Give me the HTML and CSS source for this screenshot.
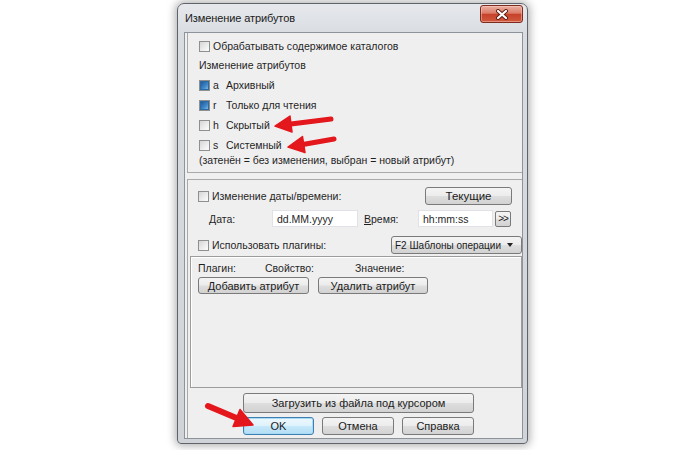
FILE: index.html
```html
<!DOCTYPE html>
<html lang="ru">
<head>
<meta charset="utf-8">
<title>Изменение атрибутов</title>
<link rel="stylesheet" href="styles.css">
</head>
<body>
<div class="window">
  <div class="titlebar">
    <span class="title">Изменение атрибутов</span>
    <span class="close"><svg width="14" height="11" viewBox="0 0 14 11"><path d="M3 2 L11 9 M11 2 L3 9" stroke="#5b1b10" stroke-width="4" stroke-linecap="round"/><path d="M3 2 L11 9 M11 2 L3 9" stroke="#ffffff" stroke-width="2.2" stroke-linecap="round"/></svg></span>
  </div>
  <div class="client">
    <div class="attrs">
      <div class="row first"><span class="cb"></span><span>Обрабатывать содержимое каталогов</span></div>
      <div class="caption">Изменение атрибутов</div>
      <div class="row attr"><span class="cb ind"></span><span class="key">a</span><span>Архивный</span></div>
      <div class="row attr"><span class="cb ind"></span><span class="key">r</span><span>Только для чтения</span></div>
      <div class="row attr"><span class="cb"></span><span class="key">h</span><span>Скрытый</span></div>
      <div class="row attr"><span class="cb"></span><span class="key">s</span><span>Системный</span></div>
      <div class="note">(затенён = без изменения, выбран = новый атрибут)</div>
    </div>
    <div class="dates">
      <div class="row r-date"><span class="cb"></span><span>Изменение даты/времени:</span><span class="btn current">Текущие</span></div>
      <div class="row r-fields"><span class="lbl l-date"><u>Д</u>ата:</span><span class="edit e-date">dd.MM.yyyy</span><span class="lbl l-time"><u>В</u>ремя:</span><span class="edit e-time">hh:mm:ss</span><span class="btn more">&gt;&gt;</span></div>
      <div class="row r-plug"><span class="cb"></span><span>Использовать плагины:</span><span class="btn combo"><span>F2 Шаблоны операции</span><span class="arrow"></span></span></div>
      <div class="plugins">
        <div class="heads"><span class="h-plugin">Плагин:</span><span class="h-prop">Свойство:</span><span>Значение:</span></div>
        <div class="pbtns"><span class="btn add">Добавить атрибут</span><span class="btn del">Удалить атрибут</span></div>
      </div>
      <div class="btn load">Загрузить из файла под курсором</div>
      <div class="actions"><span class="btn ok">OK</span><span class="btn cancel">Отмена</span><span class="btn help">Справка</span></div>
    </div>
  </div>
</div>
<svg class="marks" width="700" height="450" viewBox="0 0 700 450">
  <g fill="#e3171c" stroke="#e3171c" stroke-linecap="round" stroke-linejoin="round">
    <line x1="331" y1="119" x2="287" y2="124.5" stroke-width="5"/>
    <polygon points="275,126 292,132 290,116" stroke-width="1.5"/>
    <line x1="334" y1="139" x2="300" y2="145" stroke-width="5"/>
    <polygon points="288,147 305,152.5 302.5,136.5" stroke-width="1.5"/>
    <line x1="208" y1="406" x2="240" y2="419.5" stroke-width="6"/>
    <polygon points="253,425 233,426.5 240,409.5" stroke-width="1.5"/>
  </g>
</svg>
</body>
</html>
```

FILE: styles.css
```css
html, body {
  margin: 0;
  padding: 0;
}

body {
  width: 700px;
  height: 450px;
  overflow: hidden;
  background: #ffffff;
  font-family: "Liberation Sans", Arial, sans-serif;
  font-size: 10.5px;
  color: #1f1f1f;
  position: relative;
  white-space: nowrap;
}

.window {
  box-sizing: border-box;
  width: 351px;
  height: 441px;
  margin: 3px 0 0 177px;
  border: 1px solid #5f646a;
  border-radius: 7px 7px 4px 4px;
  background: linear-gradient(180deg, #e6e8ec 0, #d9dde2 30px, #d0d4d9 100%);
  padding: 0 4px 4px 6px;
  display: flex;
  flex-direction: column;
  box-shadow: 0 0 8px 2px rgba(0, 0, 0, 0.3);
}

.titlebar {
  height: 28px;
  flex: none;
  display: flex;
  justify-content: space-between;
  align-items: flex-start;
}

.title {
  font-size: 11px;
  letter-spacing: -0.1px;
  line-height: 14px;
  margin: 7px 0 0 1px;
  color: #202020;
}

.close {
  box-sizing: border-box;
  width: 43px;
  height: 18px;
  margin-top: 1px;
  border: 1px solid #7d2b1e;
  border-radius: 3px;
  background: linear-gradient(180deg, #eab0a3 0, #dc7c67 45%, #c6422b 52%, #d15a3f 100%);
  display: flex;
  align-items: center;
  justify-content: center;
  box-shadow: inset 0 0 0 1px rgba(255, 210, 200, 0.45);
}

.close svg {
  display: block;
}

.client {
  flex: 1;
  border: 1px solid #8d939a;
  background: #f0eff0;
  display: flex;
  flex-direction: column;
}

.attrs {
  box-sizing: border-box;
  height: 140px;
  margin-left: 2px;
  border-left: 1px solid #a9a9a9;
  border-bottom: 1px solid #a9a9a9;
  padding-left: 11px;
  flex: none;
}

.row {
  display: flex;
  align-items: center;
}

.first {
  height: 20px;
  margin-top: 3px;
}

.caption {
  height: 18px;
  line-height: 18px;
}

.attr {
  height: 20px;
}

.caption + .attr {
  margin-top: 1px;
}

.note {
  line-height: 14px;
  margin-top: -2px;
}

.cb {
  box-sizing: border-box;
  width: 11px;
  height: 11px;
  flex: none;
  margin-right: 3px;
  border: 1px solid #8e8f8f;
  background: linear-gradient(135deg, #d6d6d6 0, #f2f2f2 70%, #fbfbfb 100%);
  display: flex;
  align-items: center;
  justify-content: center;
}

.cb.ind::before {
  content: "";
  width: 7px;
  height: 7px;
  background: linear-gradient(135deg, #1e5a9a 0, #3f86c8 60%, #7ab8e6 100%);
  box-shadow: 0 0 0 1px #2c6aa6;
}

.key {
  width: 13px;
  flex: none;
}

.dates {
  flex: 1;
  margin: 6px 0 0 2px;
  border-left: 1px solid #a9a9a9;
  border-top: 1px solid #a9a9a9;
  display: flex;
  flex-direction: column;
}

.btn {
  box-sizing: border-box;
  border: 1px solid #7a7a7a;
  border-radius: 3px;
  background: linear-gradient(180deg, #f4f4f4 0, #ececec 48%, #dedede 52%, #d2d2d2 100%);
  display: flex;
  align-items: center;
  justify-content: center;
  color: #1b1b1b;
  flex: none;
}

.r-date {
  height: 18px;
  margin-top: 7px;
  padding-left: 10px;
}

.current {
  width: 87px;
  height: 18px;
  margin: 0 10px 0 auto;
  font-size: 11.5px;
}

.r-fields {
  height: 17px;
  margin-top: 5px;
  padding-left: 21px;
}

.lbl {
  flex: none;
}

.l-date {
  width: 63px;
}

.l-time {
  width: 54px;
  margin-left: 6px;
}

.edit {
  box-sizing: border-box;
  height: 17px;
  background: #ffffff;
  border: 1px solid #e1e2e8;
  padding-left: 4px;
  display: flex;
  align-items: center;
  flex: none;
}

.e-date {
  width: 86px;
}

.e-time {
  width: 75px;
}

.more {
  width: 16px;
  height: 16px;
  margin-left: 2px;
  font-size: 10px;
  letter-spacing: -1px;
  border-radius: 2px;
}

.r-plug {
  height: 18px;
  margin-top: 9px;
  padding-left: 10px;
}

.combo {
  width: 131px;
  height: 18px;
  margin-left: auto;
  justify-content: space-between;
  padding: 0 8px 0 3px;
  font-size: 10px;
}

.arrow {
  width: 0;
  height: 0;
  border-left: 3.5px solid transparent;
  border-right: 3.5px solid transparent;
  border-top: 4px solid #222;
}

.plugins {
  box-sizing: border-box;
  height: 132px;
  margin: 2px 0 0 2px;
  border: 1px solid #9c9c9c;
  box-shadow: inset 1px 1px 0 #ffffff;
  padding: 4px 0 0 7px;
  flex: none;
}

.heads {
  display: flex;
  height: 14px;
  align-items: center;
}

.h-plugin {
  width: 67px;
}

.h-prop {
  width: 90px;
}

.pbtns {
  display: flex;
  gap: 9px;
  margin-top: 2px;
}

.pbtns .btn {
  height: 17px;
  font-size: 11px;
}

.add {
  width: 111px;
}

.del {
  width: 110px;
}

.load {
  width: 231px;
  height: 20px;
  margin: 5px 0 0 55px;
  font-size: 11px;
}

.actions {
  display: flex;
  gap: 8px;
  margin: 4px 0 0 55px;
}

.actions .btn {
  height: 18px;
  width: 72px;
  font-size: 11px;
}

.actions .ok {
  width: 71px;
  border-color: #3d7fb0;
  background: linear-gradient(180deg, #eef8fd 0, #def2fc 48%, #c6e9fb 52%, #b3dcf3 100%);
  box-shadow: inset 0 0 0 1px #a8dcf6;
}

.marks {
  position: absolute;
  left: 0;
  top: 0;
  pointer-events: none;
}
```
